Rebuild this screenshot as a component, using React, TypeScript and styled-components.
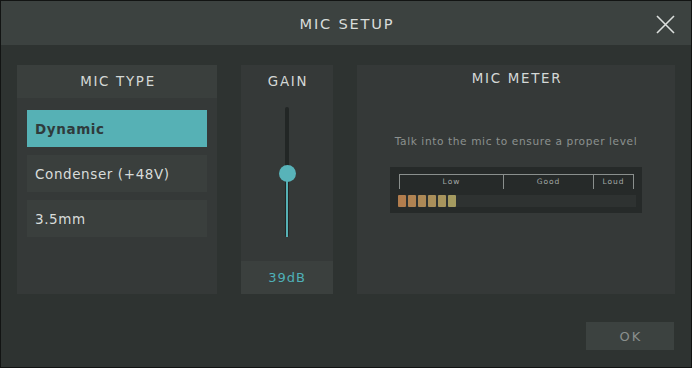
import React from "react";
import styled, { createGlobalStyle } from "styled-components";

const Global = createGlobalStyle`
  html, body { margin: 0; padding: 0; background: #111; }
  * { box-sizing: border-box; }
`;

const FONT = `"DejaVu Sans", "Noto Sans", sans-serif`;

const Window = styled.div`
  width: 692px;
  height: 368px;
  border: 1px solid #121413;
  background: #2e3331;
  font-family: ${FONT};
  display: flex;
  flex-direction: column;
`;

const Header = styled.div`
  height: 44px;
  background: #3c4240;
  position: relative;
  display: flex;
  align-items: center;
  justify-content: center;
`;

const Title = styled.div`
  color: #d8dcda;
  font-size: 14.6px;
  letter-spacing: 1.8px;
  padding-left: 2px;
`;

const Close = styled.button`
  position: absolute;
  right: 16px;
  top: 13px;
  width: 20px;
  height: 20px;
  padding: 0;
  border: 0;
  background: none;
  display: flex;
  align-items: center;
  justify-content: center;
`;

const Body = styled.div`
  flex: 1;
  display: flex;
  flex-direction: column;
  padding: 20px 16px 0 16px;
`;

const Panels = styled.div`
  display: flex;
  gap: 24px;
  height: 229px;
`;

const Panel = styled.div<{ $w: number }>`
  width: ${(p) => p.$w}px;
  background: #353938;
  display: flex;
  flex-direction: column;
`;

const PanelHead = styled.div<{ $bg?: boolean; $h: number }>`
  height: ${(p) => p.$h}px;
  background: ${(p) => (p.$bg ? "#3a3f3d" : "transparent")};
  color: #d4d8d6;
  font-size: 13.4px;
  letter-spacing: 1.7px;
  display: flex;
  align-items: center;
  justify-content: center;
  padding-left: 2px;
`;

const List = styled.div`
  display: flex;
  flex-direction: column;
  gap: 8px;
  padding: 12px 10px;
`;

const Item = styled.div<{ $active?: boolean }>`
  height: 37px;
  background: ${(p) => (p.$active ? "#56b1b5" : "#3a3f3d")};
  color: ${(p) => (p.$active ? "#2f3b3c" : "#d8dcda")};
  font-weight: ${(p) => (p.$active ? 700 : 400)};
  font-size: 13.5px;
  letter-spacing: 0.6px;
  display: flex;
  align-items: center;
  padding-left: 8px;
`;

const SliderArea = styled.div`
  flex: 1;
  display: flex;
  justify-content: center;
  padding-top: 9px;
`;

const Track = styled.div`
  position: relative;
  width: 4px;
  height: 130px;
  background: #222625;
  border-radius: 2px;
`;

const Fill = styled.div`
  position: absolute;
  left: 1px;
  bottom: 0;
  width: 2px;
  background: #56b1b5;
`;

const Knob = styled.div`
  position: absolute;
  left: 50%;
  width: 17px;
  height: 17px;
  margin-left: -8.5px;
  margin-top: -8.5px;
  border-radius: 50%;
  background: #58b3b9;
`;

const GainValue = styled.div`
  height: 33px;
  background: #3b403e;
  color: #4fb0b8;
  font-size: 13px;
  letter-spacing: 1px;
  display: flex;
  align-items: center;
  justify-content: center;
`;

const MeterBody = styled.div`
  display: flex;
  flex-direction: column;
  align-items: center;
  padding-top: 43px;
`;

const Hint = styled.div`
  color: #8c918f;
  font-size: 10.6px;
  letter-spacing: 0.6px;
`;

const MeterBox = styled.div`
  margin-top: 20px;
  width: 252px;
  height: 46px;
  background: #262a29;
  padding: 7px 6px 0 8px;
  display: flex;
  flex-direction: column;
`;

const Scale = styled.div`
  display: flex;
  height: 15px;
  margin-left: 1px;
  width: 235px;
  border-top: 1px solid #8a8f8d;
  border-right: 1px solid #8a8f8d;
`;

const Zone = styled.div<{ $w: number }>`
  width: ${(p) => p.$w}px;
  border-left: 1px solid #8a8f8d;
  color: #a4a9a7;
  font-size: 7.5px;
  letter-spacing: 1px;
  display: flex;
  justify-content: center;
  padding-top: 2px;
`;

const Bar = styled.div`
  margin-top: 6px;
  height: 12px;
  width: 238px;
  background: #2e3231;
  display: flex;
  gap: 2px;
`;

const Seg = styled.div`
  width: 8px;
  height: 12px;
  border-radius: 1px;
`;

const Footer = styled.div`
  display: flex;
  justify-content: flex-end;
  padding-top: 28px;
  padding-right: 1px;
`;

const OkButton = styled.button`
  width: 88px;
  height: 28px;
  border: 0;
  background: #3c4240;
  color: #8a8f8d;
  font-family: ${FONT};
  font-size: 13px;
  letter-spacing: 2px;
  padding: 0 0 0 2px;
`;

const segColors = ["#b27d4d", "#b08352", "#ad8956", "#aa8f5a", "#a8955d", "#a59b60"];

export default function App() {
  const gain = 0.485;
  return (
    <>
      <Global />
      <Window>
        <Header>
          <Title>MIC SETUP</Title>
          <Close aria-label="Close">
            <svg width="19" height="19" viewBox="0 0 19 19">
              <path d="M1 1 L18 18 M18 1 L1 18" stroke="#dcdfdd" strokeWidth="1.6" fill="none" />
            </svg>
          </Close>
        </Header>
        <Body>
          <Panels>
            <Panel $w={200}>
              <PanelHead $bg $h={33}>MIC TYPE</PanelHead>
              <List>
                <Item $active>Dynamic</Item>
                <Item>Condenser (+48V)</Item>
                <Item>3.5mm</Item>
              </List>
            </Panel>
            <Panel $w={92}>
              <PanelHead $h={33}>GAIN</PanelHead>
              <SliderArea>
                <Track>
                  <Fill style={{ height: `${gain * 100}%` }} />
                  <Knob style={{ top: `${(1 - gain) * 100}%` }} />
                </Track>
              </SliderArea>
              <GainValue>39dB</GainValue>
            </Panel>
            <Panel $w={318}>
              <PanelHead $h={27}>MIC METER</PanelHead>
              <MeterBody>
                <Hint>Talk into the mic to ensure a proper level</Hint>
                <MeterBox>
                  <Scale>
                    <Zone $w={104}>Low</Zone>
                    <Zone $w={90}>Good</Zone>
                    <Zone $w={40}>Loud</Zone>
                  </Scale>
                  <Bar>
                    {segColors.map((c, i) => (
                      <Seg key={i} style={{ background: c }} />
                    ))}
                  </Bar>
                </MeterBox>
              </MeterBody>
            </Panel>
          </Panels>
          <Footer>
            <OkButton>OK</OkButton>
          </Footer>
        </Body>
      </Window>
    </>
  );
}
